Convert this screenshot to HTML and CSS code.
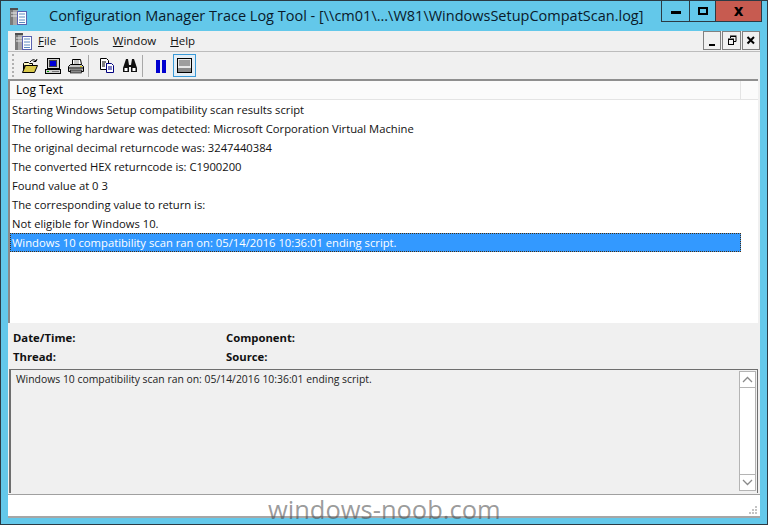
FILE: index.html
```html
<!DOCTYPE html>
<html lang="en">
<head>
<meta charset="utf-8">
<title>Configuration Manager Trace Log Tool</title>
<link rel="stylesheet" href="styles.css">
</head>
<body>
<div class="window">
  <header class="titlebar">
    <svg class="app-icon" width="18" height="18" viewBox="0 0 18 18"><rect x="1" y="1" width="8" height="17" fill="#a8a8a8"/><rect x="1" y="1" width="3" height="17" fill="#7a7a7a"/><rect x="1" y="1" width="8" height="2" fill="#4e4e4e"/><path d="M2 6h6M2 9h6" stroke="#e8e8e8"/><rect x="8.500" y="4.500" width="9" height="13" fill="#fff" stroke="#5a62b0"/><path d="M10 7h6M10 10h6M10 13h6M10 15.500h6" stroke="#5a8ac0"/></svg>
    <h1 class="title">Configuration Manager Trace Log Tool - [\\cm01\...\W81\WindowsSetupCompatScan.log]</h1>
    <div class="caption-buttons">
      <div class="cap cap-min"><span class="min-glyph"></span></div>
      <div class="cap cap-max"><span class="max-glyph"></span></div>
      <div class="cap cap-close">x</div>
    </div>
  </header>
  <div class="client">
    <div class="menubar">
      <svg class="menu-icon" width="18" height="18" viewBox="0 0 18 18"><rect x="1" y="1" width="8" height="17" fill="#a8a8a8"/><rect x="1" y="1" width="3" height="17" fill="#7a7a7a"/><rect x="1" y="1" width="8" height="2" fill="#4e4e4e"/><path d="M2 6h6M2 9h6" stroke="#e8e8e8"/><rect x="8.500" y="4.500" width="9" height="13" fill="#fff" stroke="#5a62b0"/><path d="M10 7h6M10 10h6M10 13h6M10 15.500h6" stroke="#5a8ac0"/></svg>
      <nav class="menus">
        <span><u>F</u>ile</span><span><u>T</u>ools</span><span><u>W</u>indow</span><span><u>H</u>elp</span>
      </nav>
      <div class="mdi-buttons">
        <div class="mdi"><svg width="16" height="17" viewBox="0 0 16 17"><rect x="5" y="12" width="6" height="2" fill="#000"/></svg></div>
        <div class="mdi"><svg width="16" height="17" viewBox="0 0 16 17"><path d="M6.500 6V4.500h5.500v5h-2" fill="none" stroke="#000"/><rect x="4.500" y="7.500" width="5" height="5" fill="none" stroke="#000"/><path d="M6 4h6.500M4 7h6" stroke="#000"/></svg></div>
        <div class="mdi"><svg width="16" height="17" viewBox="0 0 16 17"><path d="M4.500 5l6.500 6.500M11 5l-6.500 6.500" stroke="#000" stroke-width="2"/></svg></div>
      </div>
    </div>
    <div class="toolbar">
      <span class="grip"></span>
      <svg class="tool" width="18" height="18" viewBox="0 0 18 18"><path d="M2.500 15.500v-9l1-1h4l1 1h3v2h-8l-1 7z" fill="#fff8c0" stroke="#000"/><path d="M1.500 15.500l3-7h12l-3 7z" fill="#d8c84a" stroke="#000"/><path d="M9 5q3-4 6-1M15 4.500l1-2.500M15 4.500l-2.500 0" fill="none" stroke="#000"/></svg>
      <svg class="tool" width="18" height="18" viewBox="0 0 18 18"><rect x="3.500" y="1.500" width="12" height="10" fill="#d0d0d0" stroke="#000"/><rect x="5.500" y="3.500" width="7" height="6" fill="#0000d8" stroke="#444"/><rect x="1.500" y="12.500" width="15" height="4" fill="#d0d0d0" stroke="#000"/><rect x="3" y="14" width="2" height="1" fill="#0a0"/><path d="M8 14.500h7" stroke="#777"/></svg>
      <svg class="tool" width="18" height="18" viewBox="0 0 18 18"><path d="M5.500 7.500v-5h8l1 5z" fill="#fff" stroke="#000"/><path d="M7 4h5M7 6h5" stroke="#888"/><path d="M1.500 9.500l2-2h11l2 2v5h-15z" fill="#c4c4c4" stroke="#000"/><path d="M1 11h16" stroke="#000"/><rect x="3.500" y="13" width="11" height="3" fill="#888" stroke="#000" stroke-width=".6"/><rect x="13" y="9" width="2" height="1" fill="#dc0"/></svg>
      <span class="sep"></span>
      <svg class="tool" width="18" height="18" viewBox="0 0 18 18"><path d="M2.500 1.500h6l2 2v3h-2v6h-6z" fill="#fff" stroke="#000"/><path d="M8.500 6.500h5l2 2v7h-7z" fill="#fff" stroke="#000080"/><path d="M10 10h4M10 12h4" stroke="#000080"/><path d="M4 5h4M4 7h3M4 9h3" stroke="#000"/></svg>
      <svg class="tool" width="18" height="18" viewBox="0 0 18 18"><path d="M5 2h2l1 6h2l1-6h2l3 9v4h-6v-5H8v5H2v-4z" fill="#111"/><rect x="3.500" y="11" width="3" height="3" fill="#fff"/><rect x="11.500" y="11" width="3" height="3" fill="#fff"/></svg>
      <span class="sep"></span>
      <svg class="tool" width="18" height="18" viewBox="0 0 18 18"><rect x="4" y="3" width="4" height="13" fill="#0000d0"/><rect x="10" y="3" width="4" height="13" fill="#0000d0"/></svg>
      <div class="tool-active"><svg width="17" height="17" viewBox="0 0 17 17"><rect x="1.500" y="1.500" width="14" height="14" fill="#e8e8e8" stroke="#000"/><path d="M3 4h11M3 6h11M3 8h11" stroke="#555"/><rect x="2" y="11" width="13" height="4" fill="#8c8c8c"/></svg></div>
    </div>
    <section class="log">
      <div class="log-header"><span class="col-text">Log Text</span><span class="col-end"></span></div>
      <div class="rows">
        <div class="row">Starting Windows Setup compatibility scan results script</div>
        <div class="row">The following hardware was detected: Microsoft Corporation Virtual Machine</div>
        <div class="row">The original decimal returncode was: 3247440384</div>
        <div class="row">The converted HEX returncode is: C1900200</div>
        <div class="row">Found value at 0 3</div>
        <div class="row">The corresponding value to return is:</div>
        <div class="row">Not eligible for Windows 10.</div>
        <div class="row selected">Windows 10 compatibility scan ran on: 05/14/2016 10:36:01 ending script.</div>
      </div>
    </section>
    <section class="details">
      <div class="fields">
        <span>Date/Time:</span><span>Component:</span>
        <span>Thread:</span><span>Source:</span>
      </div>
      <div class="message">
        <p class="message-text">Windows 10 compatibility scan ran on: 05/14/2016 10:36:01 ending script.</p>
        <div class="scrollbar">
          <div class="sb-btn"><svg width="11" height="7" viewBox="0 0 11 7"><path d="M1 6l4.500-4.500L10 6" fill="none" stroke="#8a8a8a" stroke-width="1.300"/></svg></div>
          <div class="sb-track"></div>
          <div class="sb-btn"><svg width="11" height="7" viewBox="0 0 11 7"><path d="M1 1l4.500 4.500L10 1" fill="none" stroke="#8a8a8a" stroke-width="1.300"/></svg></div>
        </div>
      </div>
    </section>
    <footer class="status">
      <svg class="size-grip" width="10" height="10" viewBox="0 0 10 10"><path d="M7 1h2v2H7zM4 4h2v2H4zM7 4h2v2H7zM1 7h2v2H1zM4 7h2v2H4zM7 7h2v2H7z" fill="#c4c4c4"/></svg>
    </footer>
  </div>
  <div class="watermark">windows-noob.com</div>
</div>
</body>
</html>
```
FILE: styles.css
```css
* { box-sizing: border-box; }
html, body { margin: 0; padding: 0; width: 768px; height: 525px; overflow: hidden; }
body { font-family: "Open Sans", "Noto Sans", sans-serif; font-size: 11px; color: #000; }
.window { position: relative; width: 768px; height: 525px; background: #63c8ea; border: 1px solid #2b3a44; padding: 0 7px 6px; display: flex; flex-direction: column; }
.titlebar { height: 30px; display: flex; align-items: flex-start; flex: none; }
.app-icon { margin: 6px 0 0 1px; flex: none; }
.title { margin: 4px 0 0 22px; font-weight: 400; font-size: 14.500px; line-height: 22px; color: #0a1a2a; white-space: nowrap; flex: 1; }
.caption-buttons { display: flex; height: 21px; margin-right: -2px; border: 1px solid #2b3a44; border-top: 0; flex: none; }
.cap { display: flex; align-items: center; justify-content: center; height: 20px; border-right: 1px solid #2b3a44; }
.cap-min { width: 28px; }
.cap-max { width: 26px; }
.cap-close { width: 45px; background: #c75b50; border-right: 0; font: bold 15px/20px "DejaVu Sans", sans-serif; }
.min-glyph { width: 10px; height: 3px; background: #000; margin-top: 3px; }
.max-glyph { width: 10px; height: 8px; border: 2px solid #000; }
.client { flex: 1; min-height: 0; display: flex; flex-direction: column; background: #f0f0f0; }
.menubar { height: 21px; flex: none; display: flex; align-items: center; border-bottom: 1px solid #bcbcbc; padding-left: 6px; }
.menu-icon { flex: none; }
.menus { display: flex; gap: 14px; margin: 0 0 0 6px; font-size: 11.500px; line-height: 18px; flex: 1; color: #111; }
.mdi-buttons { display: flex; gap: 1px; align-self: flex-start; }
.mdi { width: 18.330px; height: 19px; border: 1px solid #808080; background: #f0f0f0; display: flex; align-items: center; justify-content: center; }
.toolbar { height: 27px; flex: none; display: flex; align-items: center; padding-left: 4px; }
.grip { width: 3px; height: 23px; border-left: 2px dotted #b0b0b0; margin-right: 6px; }
.tool { flex: none; margin-right: 5px; }
.sep { width: 1px; height: 22px; background: #a8a8a8; margin: 0 9px 0 -2px; }
.tool-active { width: 23px; height: 23px; border: 1px solid #3a9ad8; background: #e4eef6; display: flex; align-items: center; justify-content: center; margin-left: -2px; }
.log { flex: none; height: 244px; margin: 0 2px 0 0; border-top: 2px solid #8f8f8f; border-left: 2px solid #8a8a8a; background: #fff; display: flex; flex-direction: column; }
.log-header { height: 19px; flex: none; display: flex; background: #fbfbfb; border-bottom: 1px solid #e4e4e4; font-size: 12px; line-height: 18px; }
.col-text { width: 731px; padding-left: 6px; border-right: 1px solid #e4e4e4; }
.col-end { flex: 1; }
.rows { display: flex; flex-direction: column; }
.row { height: 19px; line-height: 19px; padding-left: 2px; font-size: 11.240px; white-space: nowrap; color: #111; }
.selected { width: 731px; background: #3399ff; color: #fff; outline: 1px dotted #4a3010; outline-offset: -1px; }
.details { flex: 1; min-height: 0; display: flex; flex-direction: column; padding-left: 1px; }
.fields { display: grid; grid-template-columns: 213px 1fr; grid-auto-rows: 19px; padding: 5px 0 0 4px; height: 46px; font-weight: 700; font-size: 11.300px; line-height: 19px; color: #111; flex: none; }
.message { flex: 1; min-height: 0; margin-right: 2px; border-top: 1px solid #6e6e6e; border-left: 2px solid #6e6e6e; border-right: 1px solid #6e6e6e; display: flex; justify-content: space-between; padding: 1px 0 2px; }
.message-text { margin: 1px 0 0 5px; font-size: 10.400px; line-height: 15px; color: #222; }
.scrollbar { width: 17px; display: flex; flex-direction: column; background: #fff; border: 1px solid #b4b4b4; margin-right: 1px; }
.sb-btn { height: 16px; flex: none; display: flex; align-items: center; justify-content: center; background: #fff; border-bottom: 1px solid #b4b4b4; }
.sb-btn:last-child { border-bottom: 0; border-top: 1px solid #b4b4b4; }
.sb-track { flex: 1; }
.status { height: 24px; flex: none; margin-top: 1px; background: #fff; border-top: 1px solid #a0a0a0; border-bottom: 2px solid #a6a6a6; display: flex; justify-content: flex-end; align-items: flex-end; padding: 0 2px 1px 0; }
.watermark { position: absolute; left: 267px; top: 494px; font-family: "Open Sans", sans-serif; font-size: 25.500px; line-height: 28px; color: rgba(70,70,70,.55); white-space: nowrap; }
```
